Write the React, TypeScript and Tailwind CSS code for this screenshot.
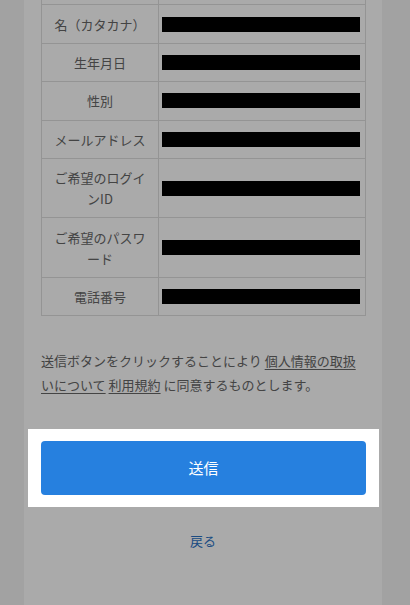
const rows: { label: string; tall?: boolean }[] = [
  { label: "姓（カタカナ）" },
  { label: "名（カタカナ）" },
  { label: "生年月日" },
  { label: "性別" },
  { label: "メールアドレス" },
  { label: "ご希望のログインID", tall: true },
  { label: "ご希望のパスワード", tall: true },
  { label: "電話番号" },
];

export default function App() {
  return (
    <div
      className="min-h-[605px] w-[410px] overflow-hidden bg-[#f3f3f3]"
      style={{ fontFamily: '"Noto Sans CJK JP", "Noto Sans", sans-serif' }}
    >
      <div className="ml-[24px] flow-root min-h-[605px] w-[358px] bg-white px-[17px]">
        <div className="-mt-[34px]">
          <table className="w-[325px] border-collapse text-[13px] text-[#666]">
            <tbody>
              {rows.map((row) => (
                <tr key={row.label} className={row.tall ? "h-[59.5px]" : "h-[38.4px]"}>
                  <th className="w-[117px] border border-[#dedede] px-2 py-0 text-center font-normal leading-[21px]">
                    {row.label}
                  </th>
                  <td className="border border-[#dedede] pl-[3px] pr-[5px]">
                    <div className="h-[15px] bg-black" />
                  </td>
                </tr>
              ))}
            </tbody>
          </table>
        </div>

        <p className="mt-[33px] text-[13px] leading-[24px] text-[#666]">
          送信ボタンをクリックすることにより{" "}
          <a href="#" className="underline underline-offset-[3px]">
            個人情報の取扱いについて
          </a>{" "}
          <a href="#" className="underline underline-offset-[3px]">
            利用規約
          </a>{" "}
          に同意するものとします。
        </p>

        <div className="relative z-10 -ml-[13px] -mr-[14px] mt-[32px] bg-white px-[13px] py-[12px] shadow-[0_0_0_9999px_rgba(0,0,0,0.333)]">
          <button className="flex h-[54px] w-full items-center justify-center rounded-[4px] bg-[#2680df] text-[15px] text-white">
            送信
          </button>
        </div>

        <div className="mt-[24px] text-center text-[13px] leading-[20px] text-[#2a72c4]">
          <a href="#">戻る</a>
        </div>
      </div>
    </div>
  );
}
